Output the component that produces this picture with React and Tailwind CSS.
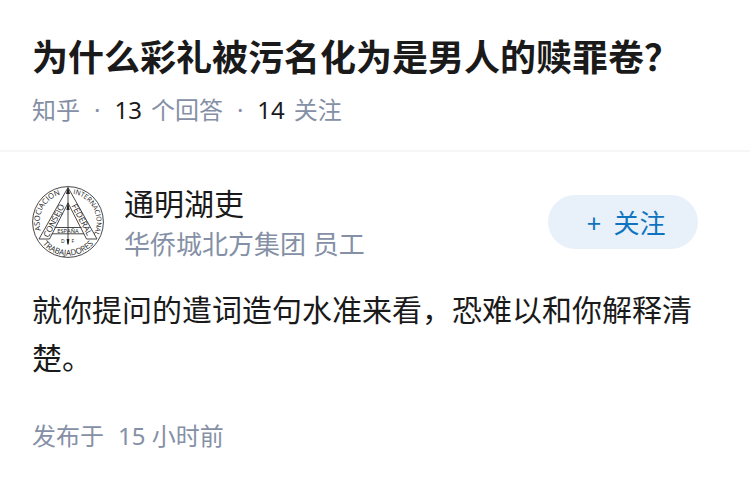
function Avatar() {
  return (
    <svg
      viewBox="0 0 72 72"
      role="img"
      aria-label="通明湖吏"
      className="size-18 shrink-0 font-['Open_Sans','Noto_Sans',sans-serif]"
      fill="none"
      stroke="#333"
      strokeWidth="0.9"
    >
      <defs>
        <path id="ring-left" d="M8.8 44.3A28.4 28.4 0 0 1 36 7.6" />
        <path id="ring-right" d="M36 7.4A28.6 28.6 0 0 1 59 53" />
        <path id="ring-bottom" d="M2.4 36A33.6 33.6 0 0 0 69.6 36" />
        <path id="leg-left" d="M16.2 52L36 14" />
        <path id="leg-right" d="M37.8 17L58 55" />
      </defs>
      <circle cx="36" cy="36" r="35.4" />
      <path d="M36 1.5L7 53H17.5L36 17L54.5 53H65Z" />
      <path d="M22.5 41.5H49.5M19.8 47.8H52.2M36 3V57" />
      <path d="M36 1L34 8H38ZM36 16L34.4 24H37.6Z" fill="#222" stroke="none" />
      <path d="M34.6 53H37.4L36.6 58.5H35.4Z" fill="#222" stroke="none" />
      <g fill="#222" stroke="none">
        <text fontSize="7.6">
          <textPath href="#ring-left">ASOCIACION</textPath>
        </text>
        <text fontSize="6.8">
          <textPath href="#ring-right" startOffset="5">INTERNACIONAL</textPath>
        </text>
        <text fontSize="8" textAnchor="middle">
          <textPath href="#ring-bottom" startOffset="50%">TRABAJADORES</textPath>
        </text>
        <text fontSize="8.4">
          <textPath href="#leg-left">CONSEJO</textPath>
        </text>
        <text fontSize="8.4">
          <textPath href="#leg-right" startOffset="3">FEDERAL</textPath>
        </text>
        <text x="36" y="46.7" fontSize="5.8" textAnchor="middle">ESPAÑA</text>
        <text x="29" y="57" fontSize="5">D</text>
        <text x="39.5" y="57" fontSize="5">F</text>
      </g>
    </svg>
  );
}

export default function App() {
  return (
    <main className="min-h-screen bg-white font-['Noto_Sans','Noto_Sans_CJK_SC',sans-serif] text-[#1a1a1a]">
      <header className="border-b-2 border-[#f6f6f6] px-8 pt-8 pb-6">
        <h1 className="text-4xl leading-[52px] font-bold">为什么彩礼被污名化为是男人的赎罪卷？</h1>
        <p className="mt-2.5 flex items-center text-2xl leading-8 text-[#8590a6]">
          <span>知乎</span>
          <span className="mx-3.5">·</span>
          <span className="mr-[9px] text-[#1a1a1a]">13</span>
          <span>个回答</span>
          <span className="mx-3.5">·</span>
          <span className="mr-[9px] text-[#1a1a1a]">14</span>
          <span>关注</span>
        </p>
      </header>

      <article className="px-8 pt-7">
        <div className="flex items-center gap-5">
          <Avatar />
          <div className="min-w-0 flex-1 pt-1">
            <h2 className="text-[30px] leading-10">通明湖吏</h2>
            <p className="text-[26px] leading-10 text-[#8590a6]">华侨城北方集团 员工</p>
          </div>
          <button
            type="button"
            className="mr-5 flex h-[54px] w-[150px] items-center justify-center gap-3 rounded-full bg-[#e8f1fa] pt-0.5 pl-1.5 text-[26px] text-[#0f73bf]"
          >
            <span>+</span>
            <span>关注</span>
          </button>
        </div>
        <p className="mt-5.5 text-[30px] leading-12">
          就你提问的遣词造句水准来看，恐难以和你解释清楚。
        </p>
        <p className="mt-9.5 flex gap-3.5 text-2xl leading-8 text-[#8590a6]">
          <span>发布于</span>
          <time>15 小时前</time>
        </p>
      </article>
    </main>
  );
}
